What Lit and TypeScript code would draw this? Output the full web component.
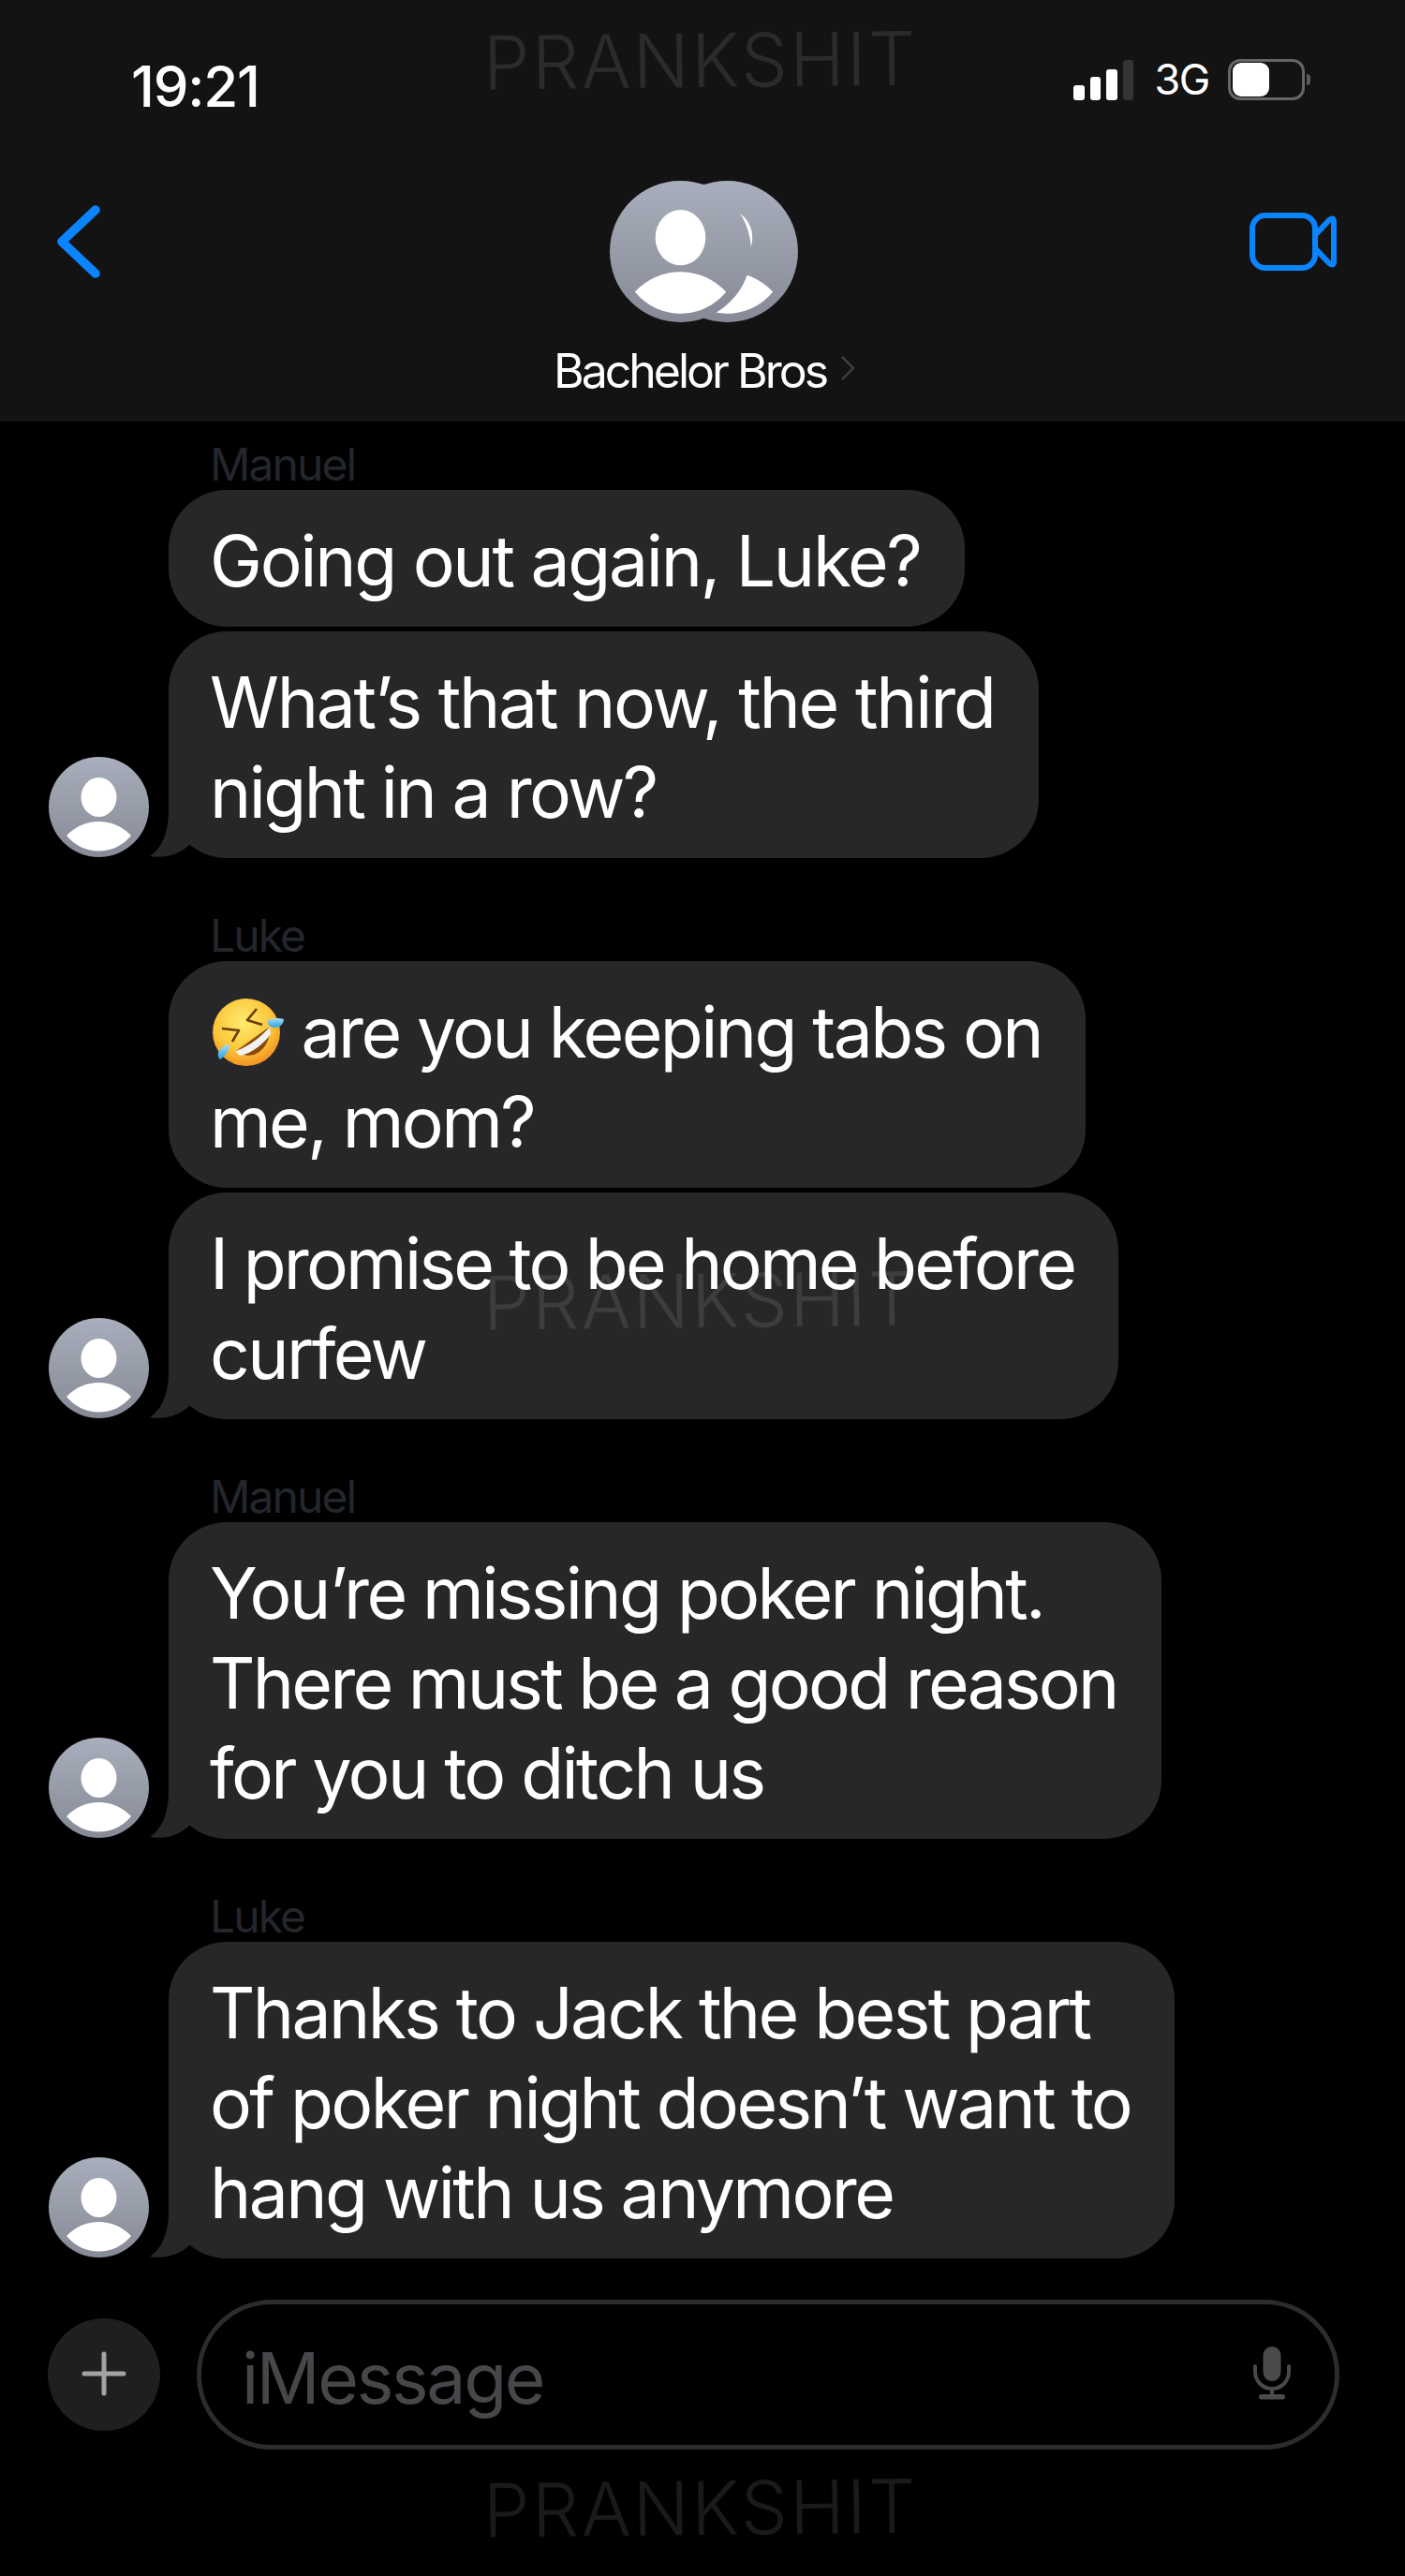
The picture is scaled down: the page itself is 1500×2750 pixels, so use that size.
import { LitElement, html, css, svg, nothing } from "lit";
import { customElement } from "lit/decorators.js";

type Line = unknown | { text: string; track: number };
type Msg = { lines: Line[]; avatar?: boolean };
type Group = { sender: string; messages: Msg[] };

// Laughing face with tears, tilted, sized to sit inline with the message text.
const laughFace = html`<svg class="emoji" viewBox="0 0 76 74" aria-hidden="true">
  <defs>
    <radialGradient id="face" cx="45%" cy="35%" r="70%">
      <stop offset="0%" stop-color="#fdeb6e" /><stop offset="60%" stop-color="#fcc63a" /><stop offset="100%" stop-color="#ef8a1c" />
    </radialGradient>
    <linearGradient id="tear" x1="0" y1="0" x2="0" y2="1">
      <stop offset="0%" stop-color="#a3e0f7" /><stop offset="100%" stop-color="#2b9fe0" />
    </linearGradient>
  </defs>
  <circle cx="36" cy="37" r="36" fill="url(#face)" />
  <path d="M61 31C63 52 44 71 25 57Z" fill="#8a4a08" />
  <path d="M61 31C50 44 38 52 25 57C26 60 28 61 30 62C42 59 54 50 62 39Z" fill="#f2f2f2" />
  <path d="M47 12L37 24L53 29" fill="none" stroke="#6b3a08" stroke-width="2.6" stroke-linejoin="round" />
  <path d="M10 33L28 35L21 47" fill="none" stroke="#6b3a08" stroke-width="2.6" stroke-linejoin="round" />
  <path d="M58 25C62 22 70 21 76 23C76 28 72 32 66 32C61 32 59 28 58 25Z" fill="url(#tear)" />
  <path d="M18 50C18 55 15 62 8 66C5 64 5 58 8 55C11 52 14 50 18 50Z" fill="url(#tear)" />
</svg>`;

const groups: Group[] = [
  {
    sender: "Manuel",
    messages: [
      { lines: [{ text: "Going out again, Luke?", track: -2.3 }] },
      { lines: [{ text: "What’s that now, the third", track: -2.25 }, "night in a row?"], avatar: true },
    ],
  },
  {
    sender: "Luke",
    messages: [
      { lines: [html`${laughFace} are you keeping tabs on`, "me, mom?"] },
      { lines: [{ text: "I promise to be home before", track: -2.8 }, "curfew"], avatar: true },
    ],
  },
  {
    sender: "Manuel",
    messages: [
      { lines: ["You’re missing poker night.", { text: "There must be a good reason", track: -2.75 }, "for you to ditch us"], avatar: true },
    ],
  },
  {
    sender: "Luke",
    messages: [
      { lines: ["Thanks to Jack the best part", "of poker night doesn’t want to", "hang with us anymore"], avatar: true },
    ],
  },
];

// One contact silhouette on a grey disc, in a 107-unit square.
const person = (x: number, grad: string) => svg`
  <g transform="translate(${x} 0)">
    <circle cx="53.5" cy="53.5" r="53.5" fill="url(#${grad})" />
    <ellipse cx="53.5" cy="43" rx="19" ry="21" fill="#fff" />
    <path d="M19 84C38 64 69 64 88 84C70 106 37 106 19 84Z" fill="#fff" />
  </g>`;

const avatarDefs = (id: string) => svg`<defs>
  <linearGradient id=${id} x1="0" y1="0" x2="0" y2="1">
    <stop offset="0%" stop-color="#a9aebc" /><stop offset="100%" stop-color="#868a96" />
  </linearGradient>
</defs>`;

@customElement("app-root")
export class AppRoot extends LitElement {
  static styles = css`
    :host {
      display: block;
      position: relative;
      width: 1500px;
      height: 2750px;
      background: #000;
      color: #fff;
      font-family: Inter, "Liberation Sans", sans-serif;
      overflow: hidden;
    }
    .header {
      height: 450px;
      box-sizing: border-box;
      background: #131313;
      padding-top: 40px;
    }
    .status {
      height: 100px;
      display: flex;
      justify-content: space-between;
      align-items: center;
      padding: 0 107px 0 140px;
    }
    .time {
      font-size: 60px;
      font-weight: 500;
      letter-spacing: -1.2px;
      line-height: 60px;
      margin-top: 3px;
    }
    .indicators {
      display: flex;
      align-items: center;
      margin-bottom: 10px;
    }
    .signal {
      display: flex;
      align-items: flex-end;
      gap: 6px;
      height: 43px;
    }
    .signal i {
      width: 11.5px;
      border-radius: 3px;
      background: #fff;
    }
    .signal i.off {
      background: #343434;
    }
    .net {
      margin-left: 22px;
      font-size: 45px;
      line-height: 44px;
      letter-spacing: -1.4px;
    }
    .battery {
      margin-left: 20px;
      width: 82px;
      height: 44px;
      box-sizing: border-box;
      border: 3px solid #666;
      border-radius: 13px;
      padding: 1px 2px;
      position: relative;
    }
    .battery::before {
      content: "";
      display: block;
      width: 39px;
      height: 100%;
      background: #fff;
      border-radius: 9px;
    }
    .battery::after {
      content: "";
      position: absolute;
      right: -9px;
      top: 13px;
      width: 4px;
      height: 12px;
      background: #5a5a5a;
      border-radius: 0 4px 4px 0;
    }
    .nav {
      margin-top: 53px;
      display: grid;
      grid-template-columns: 1fr auto 1fr;
      padding: 0 57px 0 61px;
      align-items: start;
    }
    .back {
      display: block;
      width: 46px;
      height: 78px;
      margin-top: 26px;
    }
    .video {
      display: block;
      justify-self: end;
      width: 93px;
      height: 62px;
      margin: 34px 16px 0 0;
    }
    .contact {
      display: flex;
      flex-direction: column;
      align-items: center;
    }
    .group-pic {
      display: block;
      width: 201px;
      height: 151px;
    }
    .title {
      margin-top: 22px;
      display: flex;
      align-items: center;
      font-size: 50px;
      line-height: 60px;
      letter-spacing: -3px;
    }
    .title svg {
      width: 16px;
      height: 28px;
      margin: -6px 0 0 15px;
    }
    .thread {
      padding-top: 17px;
      display: flex;
      flex-direction: column;
      gap: 54px;
    }
    .group {
      display: flex;
      flex-direction: column;
      gap: 5px;
    }
    .sender {
      height: 56px;
      margin-bottom: -5px;
      padding-left: 224px;
      font-size: 48px;
      line-height: 58px;
      letter-spacing: -1.9px;
      color: #23262b;
    }
    .row {
      display: flex;
      align-items: flex-end;
      padding-left: 52px;
      gap: 21px;
    }
    .pic,
    .pic-gap {
      flex: none;
      width: 107px;
      height: 107px;
    }
    .pic {
      display: block;
      margin-bottom: 1px;
    }
    .bubble {
      position: relative;
      padding: 28px 47px 22px 44px;
      border-radius: 62px;
      background: #272729;
    }
    .tail {
      position: absolute;
      left: -20px;
      bottom: 0;
      width: 44px;
      height: 60px;
    }
    .line {
      position: relative;
      z-index: 2;
      display: block;
      white-space: nowrap;
      font-size: 75px;
      line-height: 96px;
      letter-spacing: -2.6px;
    }
    .emoji {
      display: inline-block;
      width: 76px;
      height: 74px;
      margin: 0 0 0 3px;
      vertical-align: -10px;
    }
    .composer {
      margin-top: 44px;
      padding-left: 51px;
      display: flex;
      align-items: center;
      gap: 39px;
    }
    .plus {
      flex: none;
      width: 120px;
      height: 120px;
      border-radius: 50%;
      background: #1f1f20;
      display: flex;
      align-items: center;
      justify-content: center;
    }
    .plus svg {
      display: block;
      width: 48px;
      height: 48px;
      margin-top: -2px;
    }
    .field {
      flex: none;
      width: 1220px;
      height: 160px;
      box-sizing: border-box;
      border: 5px solid #2b2c2e;
      border-radius: 80px;
      padding: 0 47px 0 43px;
      display: flex;
      align-items: center;
      justify-content: space-between;
    }
    .placeholder {
      font-size: 75px;
      line-height: 96px;
      letter-spacing: -2.3px;
      color: #47474b;
      margin-top: 8px;
    }
    .mic {
      width: 40px;
      height: 57px;
      margin-top: -4px;
    }
    .mark {
      position: absolute;
      left: 516px;
      z-index: 1;
      font-size: 79px;
      font-weight: 300;
      line-height: 96px;
      letter-spacing: 2.3px;
      color: rgba(255, 255, 255, 0.1);
      transform: rotate(-0.6deg);
      white-space: nowrap;
    }
    .mark.top { top: 16px; }
    .mark.mid { top: 1340px; }
    .mark.bottom { top: 2629px; }
  `;

  private renderLine(l: Line) {
    // Some lines carry their own tracking so the bubble edge lands where it should.
    const t = l as { text?: string; track?: number };
    if (t && typeof t === "object" && "track" in t) {
      return html`<span class="line" style="letter-spacing: ${t.track}px">${t.text}</span>`;
    }
    return html`<span class="line">${l}</span>`;
  }

  private renderBubble(m: Msg) {
    return html`<div class="bubble">
      ${m.avatar
        ? html`<svg class="tail" viewBox="0 0 44 60" aria-hidden="true">
            <path d="M20 0V10C20 34 12 50 0 58C16 61 32 56 43 45L30 0Z" fill="#272729" />
          </svg>`
        : nothing}
      ${m.lines.map((l) => this.renderLine(l))}
    </div>`;
  }

  render() {
    return html`
      <div class="header">
        <div class="status">
          <span class="time">19:21</span>
          <div class="indicators">
            <div class="signal">
              <i style="height: 16px"></i>
              <i style="height: 25px"></i>
              <i style="height: 33px"></i>
              <i class="off" style="height: 43px"></i>
            </div>
            <span class="net">3G</span>
            <div class="battery"></div>
          </div>
        </div>
        <div class="nav">
          <svg class="back" viewBox="0 0 46 78" aria-hidden="true">
            <path d="M41 5L5 39L41 73" fill="none" stroke="#0a84ff" stroke-width="9.5" stroke-linecap="round" stroke-linejoin="round" />
          </svg>
          <div class="contact">
            <svg class="group-pic" viewBox="0 0 201 151" aria-hidden="true">
              ${avatarDefs("discHead")}
              <g transform="scale(1.411)">${person(35.4, "discHead")}${person(0, "discHead")}</g>
            </svg>
            <div class="title">
              Bachelor Bros
              <svg viewBox="0 0 16 28" aria-hidden="true">
                <path d="M2 2L14 14L2 26" fill="none" stroke="#444" stroke-width="2.2" />
              </svg>
            </div>
          </div>
          <svg class="video" viewBox="0 0 93 62" aria-hidden="true">
            <rect x="3" y="3" width="67" height="56" rx="14" fill="none" stroke="#0a84ff" stroke-width="6" />
            <path d="M70 24L85 8Q90 4 90 10V52Q90 58 85 54L70 38" fill="none" stroke="#0a84ff" stroke-width="6" stroke-linejoin="round" />
          </svg>
        </div>
      </div>

      <div class="thread">
        ${groups.map(
          (g, gi) => html`<div class="group">
            <div class="sender">${g.sender}</div>
            ${g.messages.map(
              (m, mi) => html`<div class="row">
                ${m.avatar
                  ? html`<svg class="pic" viewBox="0 0 107 107" aria-hidden="true">
                      ${avatarDefs(`disc${gi}${mi}`)}${person(0, `disc${gi}${mi}`)}
                    </svg>`
                  : html`<div class="pic-gap"></div>`}
                ${this.renderBubble(m)}
              </div>`
            )}
          </div>`
        )}
      </div>

      <div class="composer">
        <div class="plus">
          <svg viewBox="0 0 48 48" aria-hidden="true">
            <path d="M24 3V45M3 24H45" stroke="#a3a3a6" stroke-width="5" stroke-linecap="round" />
          </svg>
        </div>
        <div class="field">
          <span class="placeholder">iMessage</span>
          <svg class="mic" viewBox="0 0 40 57" aria-hidden="true">
            <rect x="10.500" y="0" width="19" height="37" rx="9.500" fill="#4a4a4a" />
            <path d="M2 21V27A18 18 0 0 0 38 27V21" fill="none" stroke="#4a4a4a" stroke-width="4" stroke-linecap="round" />
            <path d="M20 45V52" stroke="#4a4a4a" stroke-width="4" />
            <rect x="6" y="51" width="28" height="5.500" rx="2.700" fill="#4a4a4a" />
          </svg>
        </div>
      </div>

      <div class="mark top">PRANKSHIT</div>
      <div class="mark mid">PRANKSHIT</div>
      <div class="mark bottom">PRANKSHIT</div>
    `;
  }
}
